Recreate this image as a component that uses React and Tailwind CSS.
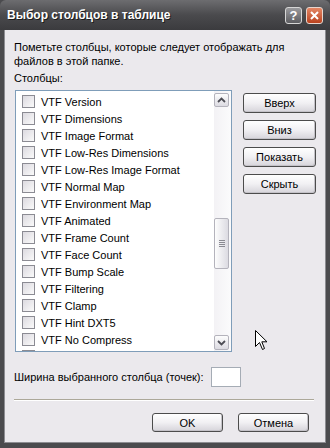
import { useState } from 'react';

const columns = [
  'VTF Version',
  'VTF Dimensions',
  'VTF Image Format',
  'VTF Low-Res Dimensions',
  'VTF Low-Res Image Format',
  'VTF Normal Map',
  'VTF Environment Map',
  'VTF Animated',
  'VTF Frame Count',
  'VTF Face Count',
  'VTF Bump Scale',
  'VTF Filtering',
  'VTF Clamp',
  'VTF Hint DXT5',
  'VTF No Compress',
];

function XpButton({ children, className = '' }) {
  return (
    <button
      className={`flex items-center justify-center rounded-[3px] border border-[#4c4c4c] bg-gradient-to-b from-[#ffffff] via-[#f1f0f3] to-[#d6d4da] text-[11px] text-black shadow-[inset_-1px_-1px_0_#c4c2c8] ${className}`}
    >
      {children}
    </button>
  );
}

function Chevron({ up }) {
  return (
    <svg width="9" height="6" viewBox="0 0 9 6">
      <path
        d={up ? 'M1 5 L4.5 1.5 L8 5' : 'M1 1 L4.5 4.5 L8 1'}
        fill="none"
        stroke="#4d4d55"
        strokeWidth="1.8"
      />
    </svg>
  );
}

function CheckBox() {
  return (
    <div className="h-[13px] w-[13px] shrink-0 border border-[#8b8b93] bg-gradient-to-br from-[#dcdae0] to-[#fafafa]" />
  );
}

export default function App() {
  const [checked, setChecked] = useState({});

  return (
    <div
      className="relative flex h-[448px] w-[330px] flex-col overflow-hidden bg-[#4b4b4e] select-none"
      style={{ fontFamily: '"Liberation Sans", Arial, sans-serif' }}
    >
      {/* title bar */}
      <div className="flex h-[30px] shrink-0 items-center justify-between rounded-t-[6px] bg-gradient-to-b from-[#6d6d70] via-[#4a4a4d] to-[#3b3b3e] pl-[7px] pr-[7px]">
        <span className="text-[12px] font-bold text-white [text-shadow:1px_1px_0_#1c1c1c]">
          Выбор столбцов в таблице
        </span>
        <div className="flex gap-[4px] pt-[1px]">
          <div className="flex h-[17px] w-[17px] items-center justify-center rounded-[3px] border border-[#d6d6d6] bg-gradient-to-b from-[#9a9a9d] to-[#5d5d61] text-[13px] font-bold leading-none text-white">
            ?
          </div>
          <div className="flex h-[17px] w-[17px] items-center justify-center rounded-[3px] border border-[#e7d6ce] bg-gradient-to-b from-[#e48664] to-[#b9411c]">
            <svg width="9" height="9" viewBox="0 0 9 9">
              <path d="M1 1 L8 8 M8 1 L1 8" stroke="#fff" strokeWidth="2" />
            </svg>
          </div>
        </div>
      </div>

      {/* body */}
      <div className="mx-[4px] mb-[5px] flex flex-1 flex-col bg-[#ebe9ed] px-[10px] pt-[10px] text-[11px] leading-[14px] text-black shadow-[inset_1px_0_0_#8d8d92,inset_-1px_0_0_#8d8d92,inset_0_-1px_0_#8d8d92]">
        <p>Пометьте столбцы, которые следует отображать для</p>
        <p>файлов в этой папке.</p>
        <p className="mt-[3px]">Столбцы:</p>

        <div className="mt-[5px] flex">
          {/* list */}
          <div className="ml-[1px] flex h-[262px] w-[217px] border border-[#7f9db9] bg-white">
            <div className="flex-1 overflow-hidden pl-[6px] pt-[2px]">
              {columns.map((c) => (
                <div
                  key={c}
                  className="flex h-[17px] items-center gap-[6px]"
                  onClick={() => setChecked({ ...checked, [c]: !checked[c] })}
                >
                  <CheckBox />
                  <span className="whitespace-nowrap">{c}</span>
                </div>
              ))}
              <div className="flex h-[17px] items-center">
                <CheckBox />
              </div>
            </div>
            {/* scrollbar */}
            <div className="flex w-[17px] flex-col bg-gradient-to-r from-[#f3f2f5] to-[#fbfbfc] pb-[1px] pt-[2px]">
              <div className="flex h-[14px] w-[15px] items-center justify-center rounded-[2px] border border-[#b4b3bc] bg-gradient-to-b from-[#fdfdfd] to-[#dcdbe2]">
                <Chevron up />
              </div>
              <div className="mt-[111px] flex h-[51px] w-[15px] items-center justify-center rounded-[2px] border border-[#b4b3bc] bg-gradient-to-r from-[#fdfdfd] to-[#dcdbe2]">
                <div className="flex flex-col gap-[1px]">
                  <div className="h-[1px] w-[6px] bg-[#8a8a92]" />
                  <div className="h-[1px] w-[6px] bg-[#8a8a92]" />
                  <div className="h-[1px] w-[6px] bg-[#8a8a92]" />
                  <div className="h-[1px] w-[6px] bg-[#8a8a92]" />
                </div>
              </div>
              <div className="mt-auto flex h-[15px] w-[15px] items-center justify-center rounded-[2px] border border-[#b4b3bc] bg-gradient-to-b from-[#fdfdfd] to-[#dcdbe2]">
                <Chevron />
              </div>
            </div>
          </div>

          {/* side buttons */}
          <div className="ml-[11px] mt-[3px] flex flex-col gap-[7px]">
            <XpButton className="h-[20px] w-[73px]">Вверх</XpButton>
            <XpButton className="h-[20px] w-[73px]">Вниз</XpButton>
            <XpButton className="h-[20px] w-[73px]">Показать</XpButton>
            <XpButton className="h-[20px] w-[73px]">Скрыть</XpButton>
          </div>
        </div>

        <div className="mt-[15px] flex items-center gap-[7px]">
          <span className="whitespace-nowrap">Ширина выбранного столбца (точек):</span>
          <div className="h-[20px] w-[30px] border border-[#a5acb5] bg-white" />
        </div>

        <div className="mt-[12px] h-[1px] w-[300px] bg-[#aca899] shadow-[0_1px_0_#fff]" />

        <div className="mt-[13px] flex justify-end gap-[15px] pr-[7px]">
          <XpButton className="h-[19px] w-[71px]">OK</XpButton>
          <XpButton className="h-[19px] w-[71px]">Отмена</XpButton>
        </div>
      </div>

      {/* mouse cursor */}
      <svg
        className="pointer-events-none absolute left-[255px] top-[330px]"
        width="13"
        height="21"
        viewBox="0 0 13 21"
      >
        <path
          d="M0.5 0.5 L0.5 16.5 L4.5 12.5 L7.5 19.5 L9.5 18.5 L6.8 11.8 L12 11.8 Z"
          fill="#fff"
          stroke="#000"
          strokeWidth="1"
        />
      </svg>
    </div>
  );
}
